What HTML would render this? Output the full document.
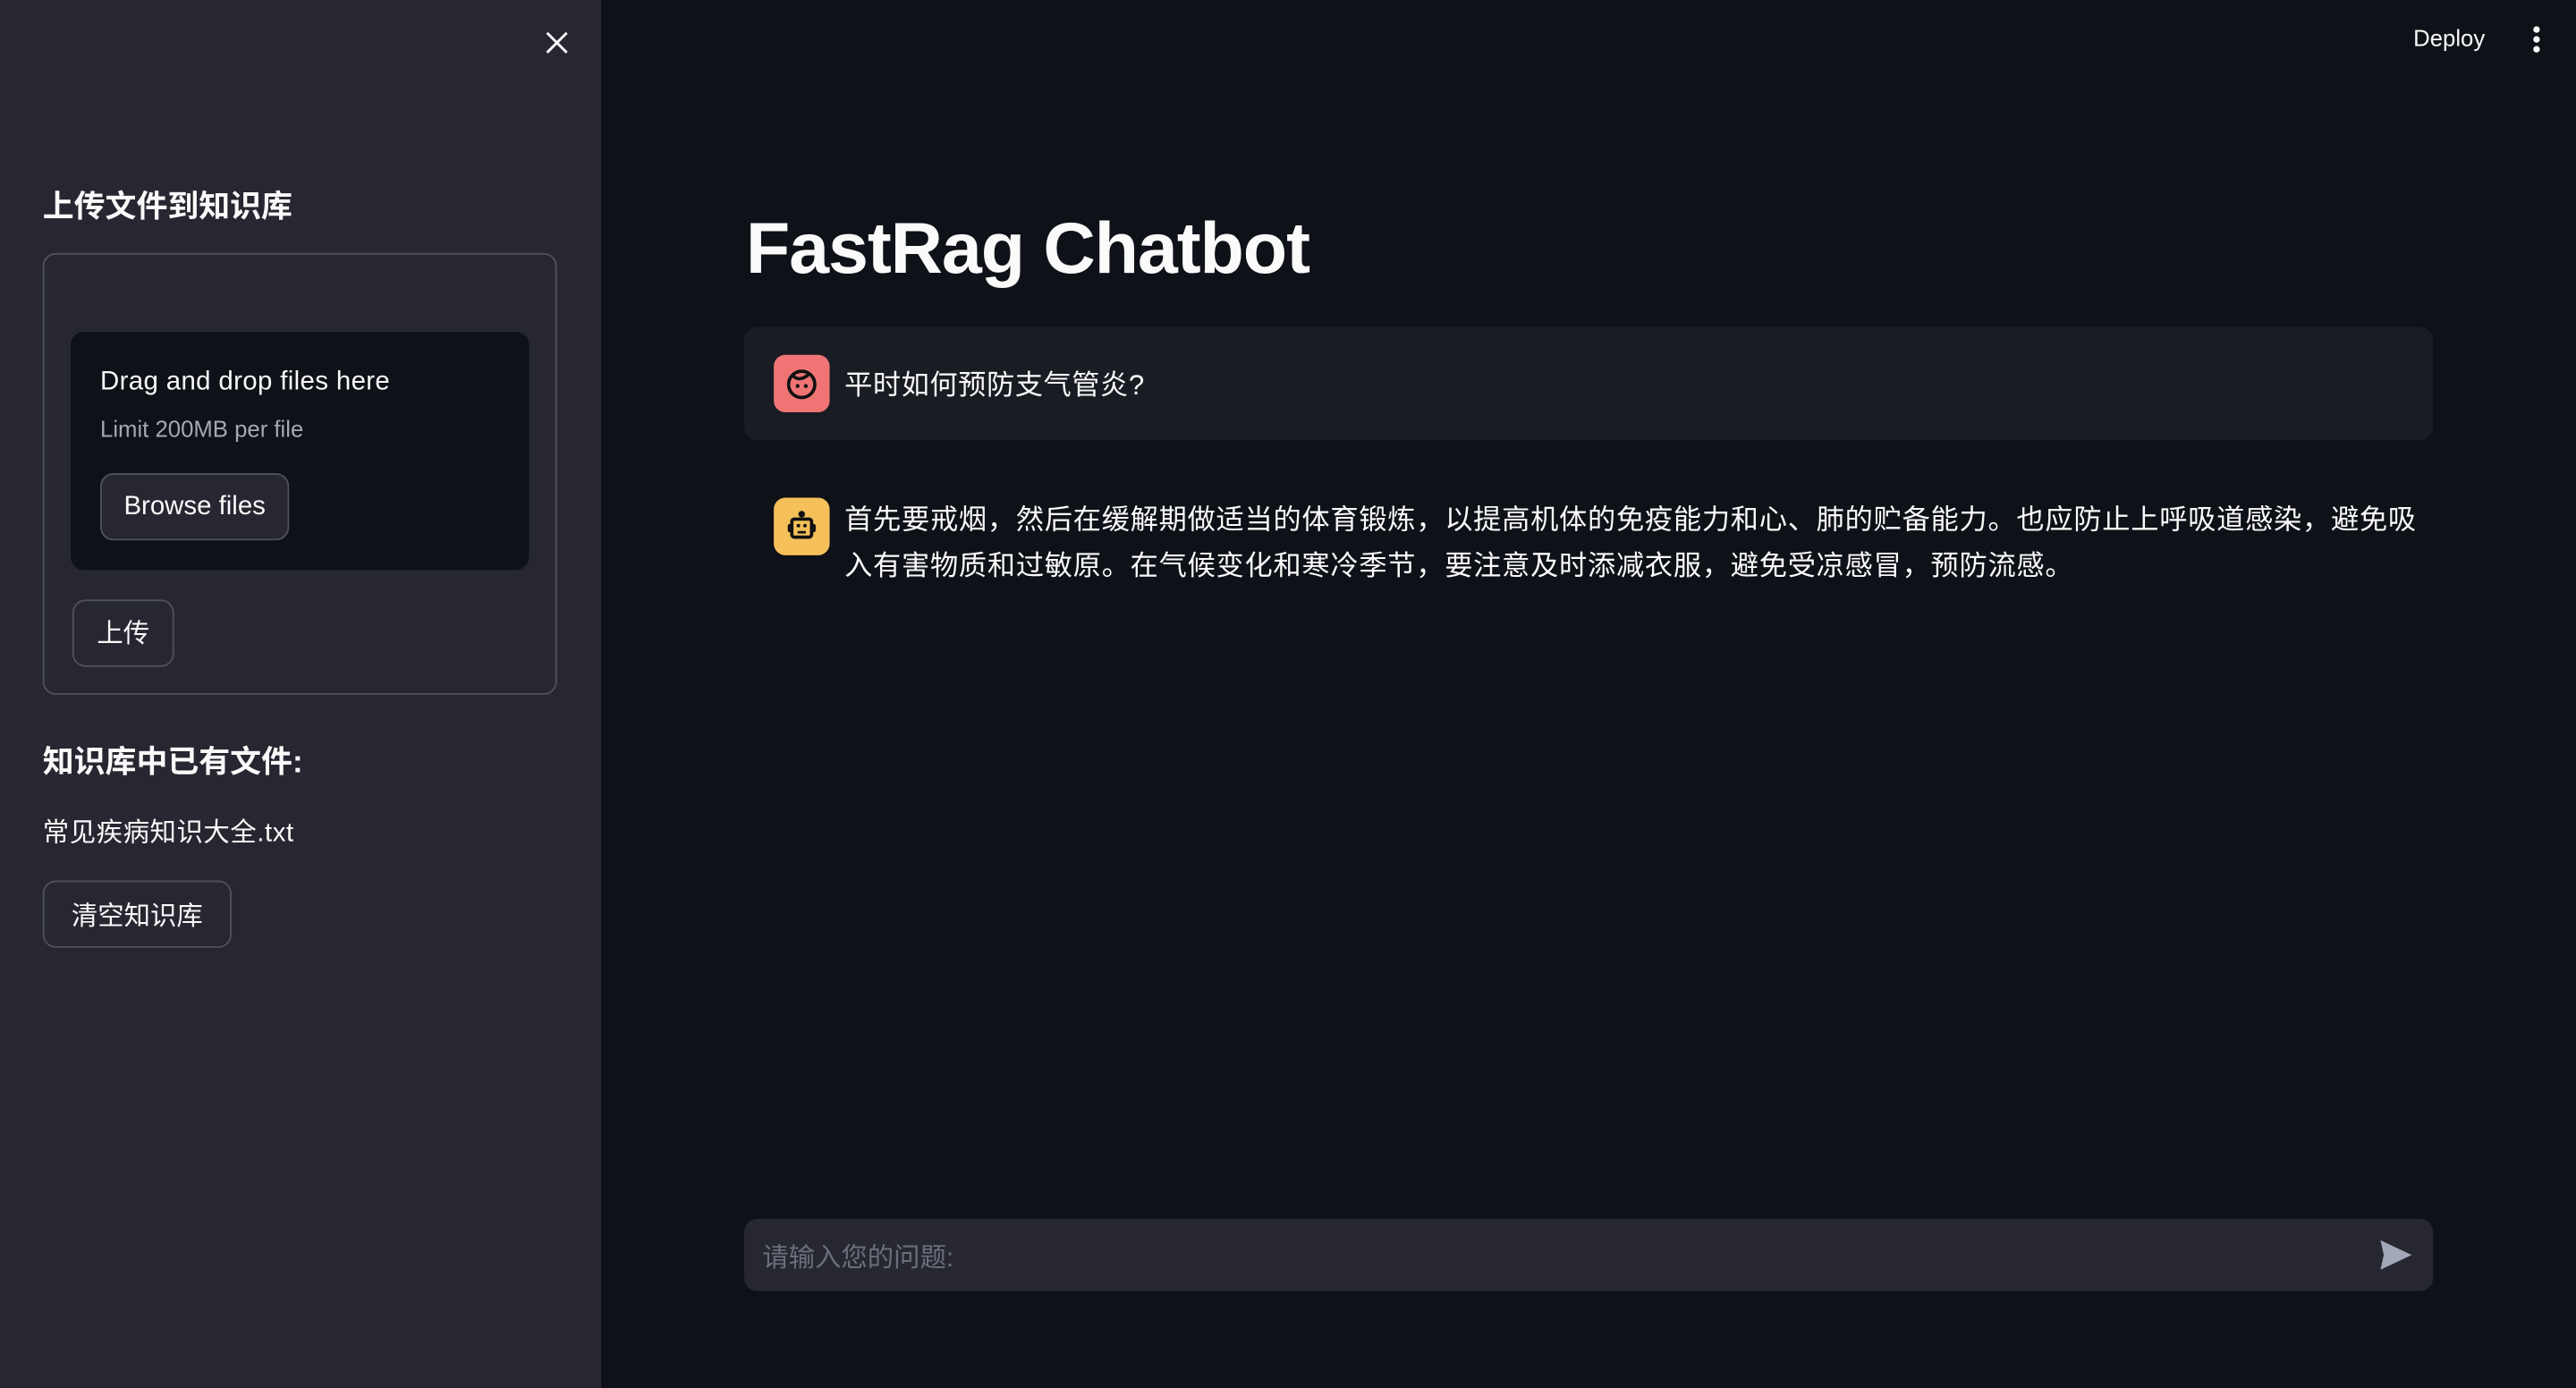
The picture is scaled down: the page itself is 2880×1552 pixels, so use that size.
<!DOCTYPE html>
<html><head><meta charset="utf-8"><style>
html,body{margin:0;padding:0;width:2880px;height:1552px;overflow:hidden;background:#0e1117;}
#s{position:absolute;left:0;top:0;width:1568px;height:845px;transform:scale(1.83673);transform-origin:0 0;font-family:"Liberation Sans","Noto Sans CJK SC",sans-serif;color:#fafafa;}
.a{position:absolute;}
.btn{position:absolute;border:1px solid rgba(250,250,250,0.2);border-radius:8px;background:#262730;box-sizing:border-box;display:flex;align-items:center;justify-content:center;font-size:16px;}
</style></head><body><div id="s">
<div class="a" style="left:0;top:0;width:366px;height:845px;background:#262730"></div>
<svg class="a" style="left:331px;top:18px" width="16" height="16" viewBox="0 0 16 16"><path d="M2 2L14 14M14 2L2 14" stroke="#fafafa" stroke-width="1.6"/></svg>
<div class="a" style="left:26px;top:111px;font-size:19px;font-weight:bold">上传文件到知识库</div>
<div class="a" style="left:26px;top:154px;width:313px;height:269px;box-sizing:border-box;border:1px solid rgba(250,250,250,0.2);border-radius:8px"></div>
<div class="a" style="left:43px;top:202px;width:279px;height:145px;background:#0e1117;border-radius:8px"></div>
<div class="a" style="left:61px;top:224px;font-size:16px;letter-spacing:0.2px">Drag and drop files here</div>
<div class="a" style="left:61px;top:253px;font-size:14px;color:#a3a8b4">Limit 200MB per file</div>
<div class="btn" style="left:61px;top:288px;width:115px;height:41px">Browse files</div>
<div class="btn" style="left:44px;top:365px;width:62px;height:41px;padding-bottom:3px">上传</div>
<div class="a" style="left:26px;top:449px;font-size:19px;font-weight:bold">知识库中已有文件:</div>
<div class="a" style="left:26px;top:493px;font-size:16px;letter-spacing:0.3px">常见疾病知识大全.txt</div>
<div class="btn" style="left:26px;top:536px;width:115px;height:41px;padding-bottom:2px">清空知识库</div>

<div class="a" style="left:1469px;top:15px;font-size:14px">Deploy</div>
<svg class="a" style="left:1540px;top:15px" width="8" height="18"><circle cx="4" cy="3" r="2" fill="#fafafa"/><circle cx="4" cy="9" r="2" fill="#fafafa"/><circle cx="4" cy="15" r="2" fill="#fafafa"/></svg>

<div class="a" style="left:454px;top:127px;font-size:44px;font-weight:bold;letter-spacing:-0.6px">FastRag Chatbot</div>
<div class="a" style="left:453px;top:199px;width:1028px;height:69px;background:#1a1c24;border-radius:8px"></div>
<div class="a" style="left:471px;top:216px;width:34px;height:35px;background:#f07474;border-radius:7px"></div>
<svg class="a" style="left:476px;top:222px" width="24" height="24" viewBox="0 0 24 24"><circle cx="12" cy="12" r="8" fill="none" stroke="#111" stroke-width="2"/><path d="M7 7c3 3 7 1 9-1" fill="none" stroke="#111" stroke-width="2"/><circle cx="9.5" cy="13" r="1.2" fill="#111"/><circle cx="14.5" cy="13" r="1.2" fill="#111"/></svg>
<div class="a" style="left:514px;top:220px;font-size:17px;letter-spacing:0.3px">平时如何预防支气管炎?</div>
<div class="a" style="left:471px;top:303px;width:34px;height:35px;background:#f5c05a;border-radius:7px"></div>
<svg class="a" style="left:476px;top:308px" width="24" height="24" viewBox="0 0 24 24"><circle cx="12" cy="5" r="2" fill="#111"/><rect x="6" y="8" width="12" height="11" rx="1.5" fill="none" stroke="#111" stroke-width="2"/><rect x="3.5" y="11" width="2.5" height="5" rx="1.2" fill="#111"/><rect x="18" y="11" width="2.5" height="5" rx="1.2" fill="#111"/><circle cx="10" cy="12" r="1.1" fill="#111"/><circle cx="14" cy="12" r="1.1" fill="#111"/><path d="M9.5 16h5" stroke="#111" stroke-width="1.5"/></svg>
<div class="a" style="left:514px;top:303px;width:966px;font-size:17px;letter-spacing:0.4px;line-height:28px">首先要戒烟，然后在缓解期做适当的体育锻炼，以提高机体的免疫能力和心、肺的贮备能力。也应防止上呼吸道感染，避免吸入有害物质和过敏原。在气候变化和寒冷季节，要注意及时添减衣服，避免受凉感冒，预防流感。</div>

<div class="a" style="left:453px;top:742px;width:1028px;height:44px;background:#262730;border-radius:8px"></div>
<div class="a" style="left:464px;top:752px;font-size:16px;color:#6b6f7b">请输入您的问题:</div>
<svg class="a" style="left:1448px;top:754px" width="21" height="20" viewBox="0 0 21 20"><path d="M1 1L20 10L1 19L3 10Z" fill="#a3a8b8"/></svg>
</div></body></html>
